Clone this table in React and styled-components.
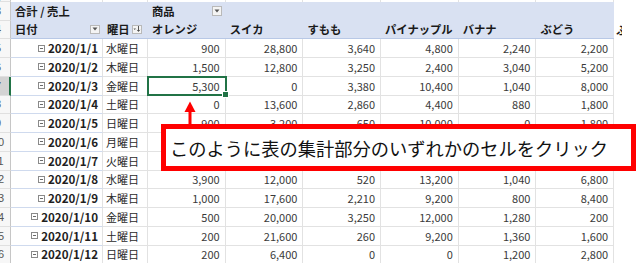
import React from "react";
import styled, { createGlobalStyle } from "styled-components";

const Global = createGlobalStyle`
  html, body { margin: 0; padding: 0; background: #ffffff; overflow: hidden; }
  body { font-family: "Noto Sans CJK JP", "Noto Sans", sans-serif; }
`;

const FONT = `"Noto Sans CJK JP", "Noto Sans", sans-serif`;
const HEAD_BG = "#d9e1f2";
const GRID = "#e2e2e2";

const Frame = styled.div`
  position: relative;
  width: 640px;
  height: 263px;
  overflow: hidden;
`;

const Sheet = styled.div`
  display: grid;
  grid-template-columns: 11px 92px 45px repeat(6, 77.7px) 8px 1fr;
  grid-template-rows: 2px 18.5px 18.8px repeat(12, 18.75px);
  font-family: ${FONT};
`;

const RowNum = styled.div`
  display: flex;
  justify-content: flex-end;
  align-items: center;
  overflow: hidden;
  box-sizing: border-box;
  background: ${(p) => (p.$selected ? "#d3d3d3" : "#f7f7f7")};
  border-right: ${(p) => (p.$selected ? "2px solid #217346" : "1px solid #c6c6c6")};
  border-bottom: 1px solid #e0e0e0;
  color: #555;
  font-size: 11px;
  font-family: "Liberation Sans", sans-serif;
`;

const RowNumText = styled.span`
  flex: 0 0 24px;
  text-align: center;
  margin-right: ${(p) => (p.$selected ? "-1px" : "0")};
`;

const TopCell = styled.div`
  box-sizing: border-box;
  border-right: 1px solid ${GRID};
  background: #fff;
`;

const HeadCell = styled.div`
  grid-column: ${(p) => (p.$span ? `span ${p.$span}` : "auto")};
  display: flex;
  align-items: center;
  justify-content: space-between;
  box-sizing: border-box;
  background: ${HEAD_BG};
  padding: 0 ${(p) => p.$padRight ?? 4}px 0 4px;
  font-size: 11.3px;
  font-weight: 700;
  color: #1a1a1a;
  white-space: nowrap;
  border-bottom: ${(p) => (p.$last ? "1px solid #b8c8e6" : "none")};
`;

const EdgeCell = styled.div`
  background: #fff;
  overflow: hidden;
  white-space: nowrap;
  display: flex;
  align-items: center;
  font-size: 11px;
  font-weight: 700;
  color: #1a1a1a;
  padding-left: 2px;
  box-sizing: border-box;
`;

const FilterButton = styled.span`
  display: inline-flex;
  align-items: center;
  justify-content: center;
  width: 10px;
  height: ${(p) => p.$h ?? 9}px;
  box-sizing: border-box;
  background: #f4f4f4;
  border: 1px solid #b9b9b9;
  flex-shrink: 0;
`;

const DateCell = styled.div`
  display: flex;
  align-items: center;
  justify-content: flex-end;
  gap: 3px;
  box-sizing: border-box;
  padding-right: 4px;
  border-right: 1px solid ${GRID};
  border-bottom: 1px solid #cfdaee;
  font-size: 11.6px;
  font-weight: 700;
  color: #1f1f1f;
  white-space: nowrap;
`;

const Collapse = styled.span`
  width: 7px;
  height: 7px;
  box-sizing: border-box;
  border: 1px solid #8a8a8a;
  position: relative;
  flex-shrink: 0;
  &::after {
    content: "";
    position: absolute;
    left: 1px;
    right: 1px;
    top: 2px;
    height: 1px;
    background: #6a6a6a;
  }
`;

const DayCell = styled.div`
  display: flex;
  align-items: center;
  box-sizing: border-box;
  padding-left: 3px;
  border-right: 1px solid ${GRID};
  border-bottom: 1px solid ${GRID};
  font-size: 11px;
  color: #2a2a2a;
  white-space: nowrap;
`;

const NumCell = styled.div`
  display: flex;
  align-items: center;
  justify-content: flex-end;
  box-sizing: border-box;
  padding-right: 5px;
  border-right: 1px solid ${GRID};
  border-bottom: 1px solid ${GRID};
  font-size: 11px;
  color: #3a3a3a;
  white-space: nowrap;
`;

const BlankCell = styled.div`
  background: #fff;
`;

const Selection = styled.div`
  position: absolute;
  left: 147px;
  top: 76px;
  width: 80px;
  height: 20px;
  box-sizing: border-box;
  border: 2px solid #217346;
  &::after {
    content: "";
    position: absolute;
    right: -4px;
    bottom: -4px;
    width: 5px;
    height: 5px;
    background: #217346;
    border: 1px solid #fff;
  }
`;

const Arrow = styled.svg`
  position: absolute;
  left: 183px;
  top: 100px;
`;

const Callout = styled.div`
  position: absolute;
  left: 161px;
  top: 124px;
  width: 475px;
  height: 47px;
  box-sizing: border-box;
  border: 5px solid #ff0000;
  background: #fff;
  display: flex;
  align-items: center;
  padding-left: 4px;
  font-family: ${FONT};
  font-size: 18.25px;
  color: #111;
  white-space: nowrap;
`;

const Caret = () => (
  <svg width="6" height="4" viewBox="0 0 6 4">
    <path d="M0.5 0.5 L5.5 0.5 L3 3.5 Z" fill="#555" />
  </svg>
);

const SortCaret = () => (
  <svg width="8" height="6" viewBox="0 0 8 6">
    <path d="M0.5 2.5 L3 2.5 L1.75 4 Z" fill="#555" />
    <path d="M5.5 0 V5.2 M4.2 3.9 L5.5 5.4 L6.8 3.9" stroke="#444" strokeWidth="0.9" fill="none" />
  </svg>
);

const fruits = ["オレンジ", "スイカ", "すもも", "パイナップル", "バナナ", "ぶどう"];

const rows = [
  ["2020/1/1", "水曜日", ["900", "28,800", "3,640", "4,800", "2,240", "2,200"]],
  ["2020/1/2", "木曜日", ["1,500", "12,800", "3,250", "2,400", "3,040", "5,200"]],
  ["2020/1/3", "金曜日", ["5,300", "0", "3,380", "10,400", "1,040", "8,000"]],
  ["2020/1/4", "土曜日", ["0", "13,600", "2,860", "4,400", "880", "1,800"]],
  ["2020/1/5", "日曜日", ["900", "3,200", "650", "10,000", "0", "1,800"]],
  ["2020/1/6", "月曜日", ["1,200", "16,000", "1,300", "8,800", "1,120", "3,400"]],
  ["2020/1/7", "火曜日", ["2,100", "9,600", "1,950", "11,200", "960", "5,200"]],
  ["2020/1/8", "水曜日", ["3,900", "12,000", "520", "13,200", "1,040", "6,800"]],
  ["2020/1/9", "木曜日", ["1,000", "17,600", "2,210", "9,200", "800", "8,400"]],
  ["2020/1/10", "金曜日", ["500", "20,000", "3,250", "12,000", "1,280", "200"]],
  ["2020/1/11", "土曜日", ["200", "21,600", "260", "9,200", "1,360", "1,600"]],
  ["2020/1/12", "日曜日", ["200", "6,400", "0", "0", "1,200", "2,800"]],
];

export default function App() {
  return (
    <Frame>
      <Global />
      <Sheet>
        {/* row 2 (partial top strip) */}
        <RowNum><RowNumText>2</RowNumText></RowNum>
        <TopCell />
        <TopCell />
        {fruits.map((f) => <TopCell key={"t" + f} />)}
        <BlankCell />
        <BlankCell />

        {/* row 3 header */}
        <RowNum><RowNumText>3</RowNumText></RowNum>
        <HeadCell $span={2}>合計 / 売上</HeadCell>
        <HeadCell $padRight={4}>
          <span>商品</span>
          <FilterButton $h={10}><Caret /></FilterButton>
        </HeadCell>
        <HeadCell $span={5} />
        <EdgeCell />
        <BlankCell />

        {/* row 4 header */}
        <RowNum><RowNumText>4</RowNumText></RowNum>
        <HeadCell $last $padRight={3}>
          <span>日付</span>
          <FilterButton><Caret /></FilterButton>
        </HeadCell>
        <HeadCell $last $padRight={6}>
          <span>曜日</span>
          <FilterButton><SortCaret /></FilterButton>
        </HeadCell>
        {fruits.map((f) => (
          <HeadCell $last key={"h" + f}>{f}</HeadCell>
        ))}
        <EdgeCell>ぶ</EdgeCell>
        <BlankCell />

        {rows.map(([date, day, vals], i) => (
          <React.Fragment key={date}>
            <RowNum $selected={i === 2}><RowNumText $selected={i === 2}>{i + 5}</RowNumText></RowNum>
            <DateCell>
              <Collapse />
              <span>{date}</span>
            </DateCell>
            <DayCell>{day}</DayCell>
            {vals.map((v, j) => (
              <NumCell key={j}>{v}</NumCell>
            ))}
            <BlankCell />
            <BlankCell />
          </React.Fragment>
        ))}
      </Sheet>

      <Selection />
      <Arrow width="14" height="25" viewBox="0 0 14 25">
        <path d="M7 1.5 L12.5 12 L1.5 12 Z" fill="#ff0000" />
        <rect x="5.5" y="11" width="3" height="14" fill="#ff0000" />
      </Arrow>
      <Callout>このように表の集計部分のいずれかのセルをクリック</Callout>
    </Frame>
  );
}
